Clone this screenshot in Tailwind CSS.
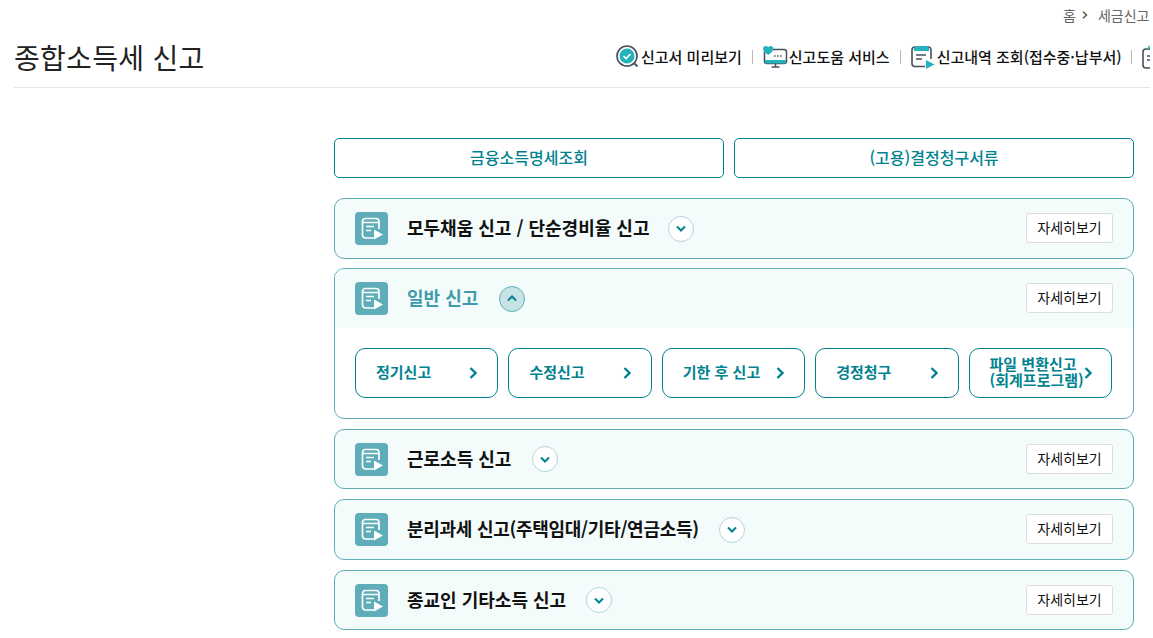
<!DOCTYPE html>
<html lang="ko">
<head>
    <meta charset="UTF-8">
    <title>종합소득세 신고</title>
    <script src="https://cdn.jsdelivr.net/npm/@tailwindcss/browser@4"></script>
</head>
<body class="bg-white h-[638px] overflow-hidden font-['Noto_Sans_CJK_KR','Noto_Sans',sans-serif] text-[#111]">
    <svg class="hidden">
        <symbol id="doc" viewBox="0 0 33 33">
            <rect width="33" height="33" rx="4" fill="#5fadb8"/>
            <path d="M19 26H10.500a3 3 0 0 1-3-3V9.500a3 3 0 0 1 3-3h10.500a3 3 0 0 1 3 3V17" fill="none" stroke="#fff" stroke-width="1.700"/>
            <path d="M8 10.500h16" fill="none" stroke="#fff" stroke-width="1.500"/>
            <path d="M11 14.500h8M11 18.500h5" fill="none" stroke="#fff" stroke-width="1.600"/>
            <path d="M19 17.500l9 5-9 5z" fill="#fff"/>
        </symbol>
    </svg>

    <div class="ml-[14px] w-[1136px] overflow-hidden">
        <!-- breadcrumb -->
        <div class="h-[32px] flex items-center pl-[1049px] pb-[2px] text-[14px] leading-[20px] text-[#666] whitespace-nowrap">
            <span>홈</span>
            <svg class="w-[6px] h-[8px] ml-[6px] mr-[10px] shrink-0" viewBox="0 0 6 8"><path d="M1 .8l3.500 3.200L1 7.200" fill="none" stroke="#555" stroke-width="1.500"/></svg>
            <span>세금신고</span>
        </div>

        <!-- title + quick links -->
        <div class="h-[56px] border-b border-[#e5e5e5] flex items-start whitespace-nowrap">
            <h1 class="text-[28px] leading-[40px] font-normal tracking-[0.3px] text-[#222] w-[602px] shrink-0 pt-[5px] h-[46px]">종합소득세 신고</h1>
            <div class="flex items-center h-[50px] text-[15px] font-medium">
                <svg class="w-[24px] h-[24px] shrink-0 mr-[1px]" viewBox="0 0 24 24">
                    <circle cx="11" cy="11" r="10" fill="none" stroke="#46505c" stroke-width="1.600"/>
                    <circle cx="11" cy="11" r="7.500" fill="#24b3bd"/>
                    <path d="M7.500 11l2.600 2.600 4.400-4.600" fill="none" stroke="#fff" stroke-width="1.600"/>
                    <path d="M18.500 18.500l3 3" stroke="#46505c" stroke-width="1.800"/>
                </svg>
                <span>신고서 미리보기</span>
                <span class="w-px h-[14px] bg-[#bbb] mx-[10px]"></span>
                <svg class="w-[26px] h-[24px] shrink-0" viewBox="0 0 26 24">
                    <rect x="1.500" y="4.500" width="22" height="14" rx="2.500" fill="#fff" stroke="#46505c" stroke-width="1.500"/>
                    <path d="M2 15h21v2.500a1 1 0 0 1-1 1H3a1 1 0 0 1-1-1z" fill="#24b3bd"/>
                    <path d="M5.200 10C1.800 7.500 0 6 0 3.800 0 1 3.600 0 5.200 2.300 6.800 0 10.400 1 10.400 3.800 10.400 6 8.600 7.500 5.200 10z" fill="#24b3bd"/>
                    <path d="M12.500 18.500v3M8.500 22h8" stroke="#46505c" stroke-width="1.500"/>
                    <path d="M11 11h1.500M14 11h1.500M17 11h1.500" stroke="#46505c" stroke-width="1.300"/>
                </svg>
                <span>신고도움 서비스</span>
                <span class="w-px h-[14px] bg-[#bbb] mx-[10px]"></span>
                <svg class="w-[25px] h-[24px] shrink-0 mr-[1px]" viewBox="0 0 25 24">
                    <path d="M14 21.500H4a3 3 0 0 1-3-3V5a3 3 0 0 1 3-3h13a3 3 0 0 1 3 3v9" fill="none" stroke="#46505c" stroke-width="1.600"/>
                    <path d="M3 6V4a3 3 0 0 1 3-3h9a3 3 0 0 1 3 3v2z" fill="#24b3bd"/>
                    <path d="M5 10h10M5 14h6" stroke="#46505c" stroke-width="1.500"/>
                    <path d="M15 15l8.500 4.500L15 24z" fill="#24b3bd"/>
                </svg>
                <span>신고내역 조회(접수중·납부서)</span>
                <span class="w-px h-[14px] bg-[#bbb] ml-[9px] mr-[10px]"></span>
                <svg class="w-[24px] h-[24px] shrink-0" viewBox="0 0 24 24">
                    <rect x="1" y="4" width="18" height="19" rx="3" fill="none" stroke="#46505c" stroke-width="1.600"/>
                    <path d="M5 11h10M5 15h10" stroke="#46505c" stroke-width="1.500"/>
                    <path d="M6 4a4 4 0 0 1 7-2" fill="none" stroke="#24b3bd" stroke-width="1.600"/>
                </svg>
            </div>
        </div>

        <!-- main -->
        <main class="ml-[320px] w-[800px] pt-[50px] flex flex-col">
            <div class="flex gap-[10px] mb-[20px] text-[16px] font-medium text-[#00838f]">
                <a class="w-[390px] h-[40px] pb-[2px] flex items-center justify-center border border-[#00838f] rounded-[5px]">금융소득명세조회</a>
                <a class="w-[400px] h-[40px] pb-[2px] flex items-center justify-center border border-[#00838f] rounded-[5px]">(고용)결정청구서류</a>
            </div>

            <section class="h-[61px] mb-[9px] border border-[#5fadb8] rounded-[10px] bg-[#f3fbfb] flex items-center pl-[20px] pr-[20px]">
                <svg class="w-[33px] h-[33px] shrink-0"><use href="#doc"/></svg>
                <h2 class="ml-[19px] pb-[2px] text-[18px] font-bold">모두채움 신고 / 단순경비율 신고</h2>
                <span class="ml-[19px] w-[26px] h-[26px] rounded-full border border-[#b5d5da] bg-white flex items-center justify-center">
                    <svg class="w-[10px] h-[7px]" viewBox="0 0 10 7"><path d="M1 1.500l4 4 4-4" fill="none" stroke="#00838f" stroke-width="2"/></svg>
                </span>
                <button class="ml-auto -mt-[1px] w-[87px] h-[30px] pb-[2px] border border-[#ddd] rounded-[3px] bg-white text-[14px]">자세히보기</button>
            </section>

            <section class="h-[151px] mb-[10px] border border-[#5fadb8] rounded-[10px] overflow-hidden">
                <div class="h-[59px] bg-[#f3fbfb] flex items-center pl-[20px] pr-[20px]">
                    <svg class="w-[33px] h-[33px] shrink-0"><use href="#doc"/></svg>
                    <h2 class="ml-[19px] pb-[2px] text-[18px] font-bold text-[#3f9dab]">일반 신고</h2>
                    <span class="ml-[21px] w-[26px] h-[26px] rounded-full border border-[#5fadb8] bg-[#c8e3e6] flex items-center justify-center">
                        <svg class="w-[10px] h-[7px]" viewBox="0 0 10 7"><path d="M1 5.500l4-4 4 4" fill="none" stroke="#00838f" stroke-width="2"/></svg>
                    </span>
                    <button class="ml-auto -mt-[1px] w-[87px] h-[30px] pb-[2px] border border-[#ddd] rounded-[3px] bg-white text-[14px]">자세히보기</button>
                </div>
                <div class="flex gap-[10px] pl-[20px] pt-[20px] text-[15px] font-bold text-[#00838f]">
                    <a class="w-[143.400px] h-[50px] pb-[2px] border border-[#00838f] rounded-[10px] flex items-center justify-between pl-[20px] pr-[20px]">정기신고
                        <svg class="w-[8px] h-[12px] mt-[2px]" viewBox="0 0 8 12"><path d="M1.500 1l5 5-5 5" fill="none" stroke="#00838f" stroke-width="2.300"/></svg></a>
                    <a class="w-[143.400px] h-[50px] pb-[2px] border border-[#00838f] rounded-[10px] flex items-center justify-between pl-[20px] pr-[20px]">수정신고
                        <svg class="w-[8px] h-[12px] mt-[2px]" viewBox="0 0 8 12"><path d="M1.500 1l5 5-5 5" fill="none" stroke="#00838f" stroke-width="2.300"/></svg></a>
                    <a class="w-[143.400px] h-[50px] pb-[2px] border border-[#00838f] rounded-[10px] flex items-center justify-between pl-[20px] pr-[20px]">기한 후 신고
                        <svg class="w-[8px] h-[12px] mt-[2px]" viewBox="0 0 8 12"><path d="M1.500 1l5 5-5 5" fill="none" stroke="#00838f" stroke-width="2.300"/></svg></a>
                    <a class="w-[143.400px] h-[50px] pb-[2px] border border-[#00838f] rounded-[10px] flex items-center justify-between pl-[20px] pr-[20px]">경정청구
                        <svg class="w-[8px] h-[12px] mt-[2px]" viewBox="0 0 8 12"><path d="M1.500 1l5 5-5 5" fill="none" stroke="#00838f" stroke-width="2.300"/></svg></a>
                    <a class="w-[143.400px] h-[50px] pb-[2px] border border-[#00838f] rounded-[10px] flex items-center justify-between pl-[20px] pr-[20px] leading-[16px] whitespace-nowrap"><span>파일 변환신고<br>(회계프로그램)</span>
                        <svg class="w-[8px] h-[12px] mt-[2px] shrink-0" viewBox="0 0 8 12"><path d="M1.500 1l5 5-5 5" fill="none" stroke="#00838f" stroke-width="2.300"/></svg></a>
                </div>
            </section>

            <section class="h-[60px] mb-[10px] border border-[#5fadb8] rounded-[10px] bg-[#f3fbfb] flex items-center pl-[20px] pr-[20px]">
                <svg class="w-[33px] h-[33px] shrink-0"><use href="#doc"/></svg>
                <h2 class="ml-[19px] pb-[2px] text-[18px] font-bold">근로소득 신고</h2>
                <span class="ml-[21px] w-[26px] h-[26px] rounded-full border border-[#b5d5da] bg-white flex items-center justify-center">
                    <svg class="w-[10px] h-[7px]" viewBox="0 0 10 7"><path d="M1 1.500l4 4 4-4" fill="none" stroke="#00838f" stroke-width="2"/></svg>
                </span>
                <button class="ml-auto w-[87px] h-[30px] pb-[2px] border border-[#ddd] rounded-[3px] bg-white text-[14px]">자세히보기</button>
            </section>

            <section class="h-[61px] mb-[10px] border border-[#5fadb8] rounded-[10px] bg-[#f3fbfb] flex items-center pl-[20px] pr-[20px]">
                <svg class="w-[33px] h-[33px] shrink-0"><use href="#doc"/></svg>
                <h2 class="ml-[19px] pb-[2px] text-[18px] font-bold tracking-[-0.28px]">분리과세 신고(주택임대/기타/연금소득)</h2>
                <span class="ml-[20px] w-[26px] h-[26px] rounded-full border border-[#b5d5da] bg-white flex items-center justify-center">
                    <svg class="w-[10px] h-[7px]" viewBox="0 0 10 7"><path d="M1 1.500l4 4 4-4" fill="none" stroke="#00838f" stroke-width="2"/></svg>
                </span>
                <button class="ml-auto -mt-[1px] w-[87px] h-[30px] pb-[2px] border border-[#ddd] rounded-[3px] bg-white text-[14px]">자세히보기</button>
            </section>

            <section class="h-[60px] border border-[#5fadb8] rounded-[10px] bg-[#f3fbfb] flex items-center pl-[20px] pr-[20px]">
                <svg class="w-[33px] h-[33px] shrink-0"><use href="#doc"/></svg>
                <h2 class="ml-[19px] pb-[2px] text-[18px] font-bold">종교인 기타소득 신고</h2>
                <span class="ml-[20px] w-[26px] h-[26px] rounded-full border border-[#b5d5da] bg-white flex items-center justify-center">
                    <svg class="w-[10px] h-[7px]" viewBox="0 0 10 7"><path d="M1 1.500l4 4 4-4" fill="none" stroke="#00838f" stroke-width="2"/></svg>
                </span>
                <button class="ml-auto w-[87px] h-[30px] pb-[2px] border border-[#ddd] rounded-[3px] bg-white text-[14px]">자세히보기</button>
            </section>
        </main>
    </div>
</body>
</html>
